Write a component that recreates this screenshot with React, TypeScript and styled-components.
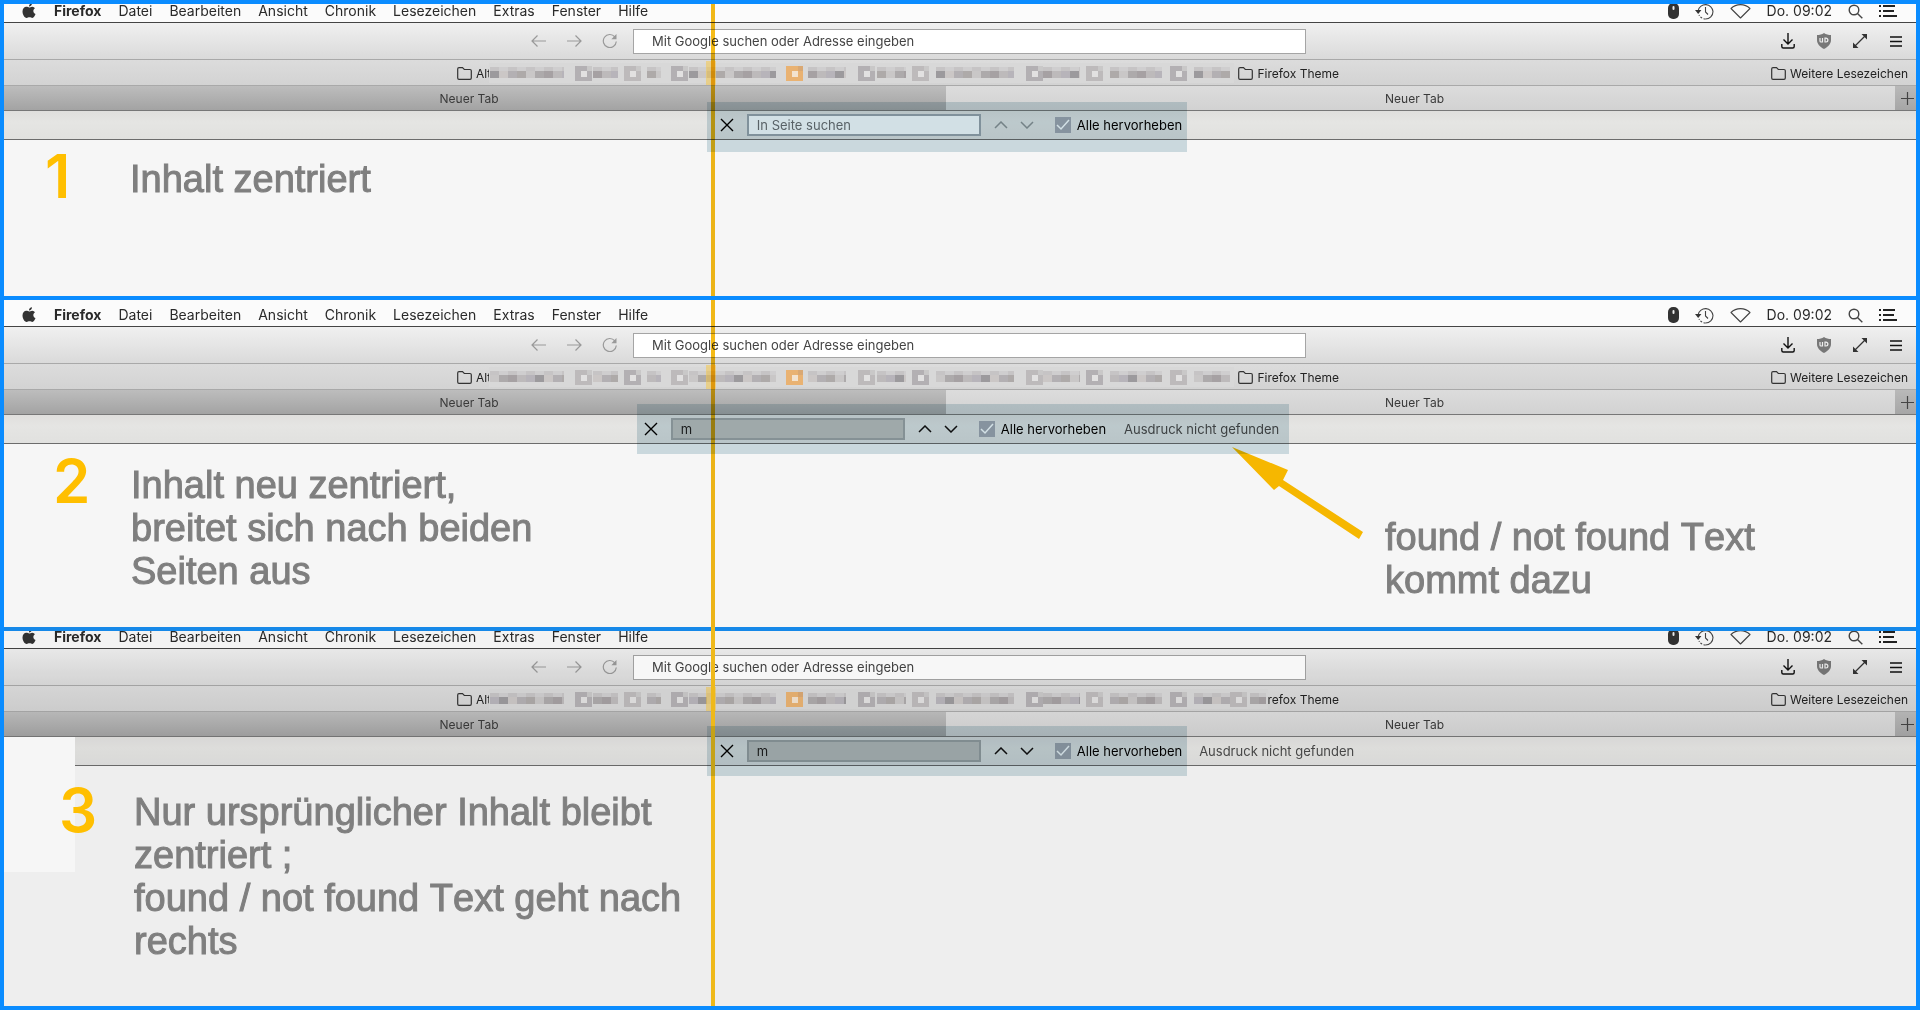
import React from 'react';
import styled, { createGlobalStyle, css } from 'styled-components';

const GlobalStyle = createGlobalStyle`
  *, *::before, *::after { box-sizing: border-box; }
  body { margin: 0; background: #0a8cff; }
  button, input { font: inherit; color: inherit; }
`;

const ui = `Inter, "Open Sans", sans-serif`;
const hand = `"Liberation Sans", Arial, sans-serif`;

const Page = styled.main`
  display: flex;
  flex-direction: column;
  min-height: 100vh;
  padding: 4px;
  font-family: ${ui};
  background: #0a8cff;
`;

const Panel = styled.section<{ $last?: boolean }>`
  position: relative;
  display: flex;
  flex-direction: column;
  flex: ${p => (p.$last ? '1 0 auto' : '0 0 auto')};
  margin-bottom: ${p => (p.$last ? 0 : 4)}px;
  background: #f6f6f6;
`;

const Divider = styled.hr`
  height: 4px;
  margin: -4px 0 0;
  border: 0;
  background: #1688e8;
`;

/* system menu bar */
const MenuBar = styled.header<{ $height: number }>`
  display: flex;
  align-items: flex-end;
  height: ${p => p.$height}px;
  overflow: hidden;
  background: #fbfbfb;
  border-bottom: 1px solid #444;
`;

const MenuRow = styled.div`
  display: flex;
  flex: 1;
  align-items: center;
  justify-content: space-between;
  height: 22px;
  padding: 0 19px 0 16px;
  font-size: 14px;
  line-height: 12px;
  color: #2a2a2a;
`;

const MenuGroup = styled.nav`
  display: flex;
  align-items: center;
  gap: 17px;
`;

const StatusGroup = styled.div`
  display: flex;
  align-items: center;
  gap: 16px;
`;

const MenuButton = styled.button<{ $bold?: boolean }>`
  padding: 0;
  border: 0;
  background: none;
  font-weight: ${p => (p.$bold ? 700 : 400)};
  line-height: 12px;
`;

const IconButton = styled.button<{ $width?: number; $color?: string }>`
  display: flex;
  align-items: center;
  justify-content: center;
  width: ${p => (p.$width ? `${p.$width}px` : 'auto')};
  padding: 0;
  border: 0;
  background: none;
  color: ${p => p.$color ?? '#2a2a2a'};
`;

/* browser chrome */
const Toolbar = styled.div`
  display: grid;
  grid-template-columns: 629fr 673fr 610fr;
  align-items: center;
  height: 37px;
  background: linear-gradient(#f0f0f0, #dadada);
  border-bottom: 1px solid #a9a9a9;
`;

const ToolGroup = styled.div<{ $end: number }>`
  display: flex;
  justify-content: flex-end;
  padding-right: ${p => p.$end}px;
`;

const UrlInput = styled.input`
  width: 100%;
  height: 25px;
  padding: 0 18px;
  border: 1px solid #a5a5a5;
  background: #fff;
  font-size: 13px;
  &::placeholder { color: #444; opacity: 1; }
`;

const BookmarkBar = styled.div`
  display: flex;
  align-items: center;
  justify-content: space-between;
  height: 26px;
  padding: 2px 8px 0 453px;
  background: linear-gradient(#dcdcdc, #d3d3d3);
  border-bottom: 1px solid #a9a9a9;
`;

const BookmarkStrip = styled.div`
  position: relative;
  display: flex;
  align-items: center;
  justify-content: space-between;
  width: 882px;
`;

const Bookmark = styled.a`
  display: flex;
  align-items: center;
  gap: 4px;
  font-size: 12px;
  line-height: 20px;
  color: #222;
  text-decoration: none;
  white-space: nowrap;
`;

const Mosaic = styled.svg`
  position: absolute;
  left: 29px;
  top: -3px;
`;

const TabBar = styled.div`
  display: grid;
  grid-template-columns: 942fr 949fr 21px;
  height: 25px;
  border-bottom: 1px solid #777;
`;

const Tab = styled.button<{ $active?: boolean }>`
  padding: 0 12px 0 0;
  border: 0;
  font-size: 12px;
  color: #3a3a3a;
  background: ${p => (p.$active ? 'linear-gradient(#dcdcdc, #d2d2d2)' : 'linear-gradient(#bdbdbd, #a3a3a3)')};
`;

const NewTab = styled.button`
  display: flex;
  align-items: center;
  justify-content: center;
  padding: 0 0 0 3px;
  border: 0;
  color: #444;
  background: linear-gradient(#b9b9b9, #a6a6a6);
`;

/* find bar */
const FindBar = styled.form<{ $before: number; $after: number }>`
  display: grid;
  grid-template-columns: 1fr auto 1fr;
  align-items: center;
  height: 29px;
  padding: 0 ${p => p.$after}px 0 ${p => p.$before}px;
  background: linear-gradient(#e0dfdd, #e5e5e3 40%, #e1e1df);
  border-bottom: 1px solid #6c6c6c;
`;

const FindGroup = styled.div<{ $start: number; $end: number }>`
  position: relative;
  display: flex;
  grid-column: 2;
  align-items: center;
  padding: 0 ${p => p.$end}px 0 ${p => p.$start}px;
`;

const Highlight = styled.div<{ $top: number }>`
  position: absolute;
  z-index: 3;
  left: 0;
  right: 0;
  top: ${p => p.$top}px;
  height: 50px;
  background: #d2e0e5;
  mix-blend-mode: multiply;
  pointer-events: none;
`;

const FindInput = styled.input<{ $missing?: boolean }>`
  width: 234px;
  height: 22px;
  margin: 0 7px;
  padding: 0 8px;
  border: 2px solid ${p => (p.$missing ? '#a2a5a6' : '#9ba5ad')};
  background: ${p => (p.$missing ? '#c1c1be' : '#fff')};
  font-size: 13px;
  color: #222;
  &::placeholder { color: #6c7073; opacity: 1; }
`;

const CheckLabel = styled.label`
  display: flex;
  align-items: center;
  gap: 6px;
  margin-left: 15px;
  font-size: 13px;
  line-height: 20px;
  color: #000;
  white-space: nowrap;
`;

const CheckBox = styled.input`
  appearance: none;
  width: 16px;
  height: 16px;
  margin: 0;
  background: #a3a8b1 url("data:image/svg+xml,%3Csvg xmlns='http://www.w3.org/2000/svg' viewBox='0 0 16 16' fill='none' stroke='white' stroke-width='1.5'%3E%3Cpath d='M2 8l4 4 8-9'/%3E%3C/svg%3E");
`;

const FindStatus = styled.output<{ $inside?: boolean }>`
  margin-left: ${p => (p.$inside ? 18 : 12)}px;
  font-size: 13px;
  line-height: 20px;
  color: #4a4a4a;
  white-space: nowrap;
`;

/* page area with the annotations */
const Stage = styled.div<{ $min: number; $top: number; $split?: boolean }>`
  display: ${p => (p.$split ? 'grid' : 'block')};
  grid-template-columns: 1228fr 684fr;
  min-height: ${p => p.$min}px;
  padding-top: ${p => p.$top}px;
`;

const Annotation = styled.div<{ $indent: number }>`
  position: relative;
  z-index: 1;
  display: flex;
  align-items: flex-start;
  padding-left: ${p => p.$indent}px;
`;

const Step = styled.span<{ $width: number }>`
  flex: none;
  width: ${p => p.$width}px;
  font: 600 60px/60px ${ui};
  color: #ffbf00;
`;

const heavier = css`
  -webkit-text-stroke: 1px currentColor;
`;

const Note = styled.p<{ $top: number }>`
  margin: ${p => p.$top}px 0 0;
  font: 38px/43px ${hand};
  font-kerning: none;
  color: #7f7f7f;
  white-space: pre-line;
  ${heavier}
`;

const Callout = styled.div`
  display: flex;
  align-items: flex-start;
  gap: 21px;
`;

const Arrow = styled.svg`
  position: relative;
  z-index: 2;
  flex: none;
  margin-top: -4px;
  mix-blend-mode: multiply;
`;

/* vertical guide showing the original left edge of the find bar */
const Guide = styled.div<{ $solid?: boolean }>`
  position: absolute;
  z-index: 2;
  top: ${p => (p.$solid ? -4 : 0)}px;
  bottom: 0;
  left: calc(50% - 249px);
  width: 4px;
  background: ${p => (p.$solid ? '#efb91a' : '#f5bb17')};
  mix-blend-mode: ${p => (p.$solid ? 'normal' : 'multiply')};
  pointer-events: none;
`;

const Patch = styled.div`
  position: absolute;
  top: 106px;
  left: 0;
  width: 71px;
  height: 135px;
  background: #f6f6f6;
`;

const Dim = styled.div`
  position: absolute;
  inset: 0;
  background: rgba(0, 0, 0, 0.032);
  pointer-events: none;
`;

const Apple = () => (
  <svg width="16" height="18" viewBox="0 0 16 18" fill="#333">
    <path d="M11 1.2c.1 1.700-1.400 3.300-3 3.200C7.800 2.800 9.300 1.300 11 1.200zM8.200 5.500c.8 0 1.700-.9 3.100-.8 1.200.1 2.100.6 2.700 1.500-2.500 1.500-2 4.900.5 5.900-.5 1.500-1.700 3.700-3.200 3.800-1 0-1.400-.7-2.800-.7s-1.800.7-2.800.7C3.500 16 1.500 12.400 1.500 9.500c0-3 1.900-4.700 3.800-4.700 1.200 0 2.200.7 2.900.7z" />
  </svg>
);

const MouseIcon = () => (
  <svg width="11" height="16" viewBox="0 0 11 16">
    <rect width="11" height="16" rx="5" fill="#333" />
    <rect x="4.500" y="3" width="2" height="4" rx="1" fill="#eee" />
  </svg>
);

const HistoryIcon = () => (
  <svg width="19" height="17" viewBox="0 0 19 17" fill="none" stroke="#444" strokeWidth="1.100">
    <path d="M3.200 7.500a7.500 7.500 0 0 1 14.800 1 7.500 7.500 0 0 1-7.500 7.500" />
    <path d="M10.500 16a7.500 7.500 0 0 1-6.500-4" strokeDasharray="2 1.500" />
    <path d="M10.500 4v5l2.500 2.500" />
    <path d="M0 7h6.400L3.200 11z" fill="#333" stroke="none" />
  </svg>
);

const WifiIcon = () => (
  <svg width="21" height="16" viewBox="0 0 21 16" fill="none" stroke="#444" strokeWidth="1.100" strokeLinejoin="round">
    <path d="M1 5.500a13.500 13.500 0 0 1 19 0L10.500 15z" />
  </svg>
);

const SearchIcon = () => (
  <svg width="15" height="15" viewBox="0 0 15 15" fill="none" stroke="#444" strokeWidth="1.400">
    <circle cx="6" cy="6" r="4.800" />
    <path d="M9.500 9.500l4.800 4.800" />
  </svg>
);

const ListIcon = () => (
  <svg width="18" height="12" viewBox="0 0 18 12" stroke="#222" strokeWidth="2">
    <path d="M0 1h2M0 6h2M0 11h2M4 1h12M4 6h11M4 11h14" />
  </svg>
);

const BackIcon = ({ flip }: { flip?: boolean }) => (
  <svg width="15" height="14" viewBox="0 0 15 14" fill="none" stroke="currentColor" strokeWidth="1.200">
    {flip ? <path d="M0 7h14M8.500 1.500L14 7l-5.500 5.500" /> : <path d="M15 7H1M6.500 1.500L1 7l5.500 5.500" />}
  </svg>
);

const ReloadIcon = () => (
  <svg width="16" height="16" viewBox="0 0 16 16" fill="none" stroke="currentColor" strokeWidth="1.200">
    <path d="M14.300 8.500A6.500 6.500 0 1 1 12.800 3.800" />
    <path d="M14.500 1v5.200H9.300z" fill="currentColor" stroke="none" />
  </svg>
);

const DownloadIcon = () => (
  <svg width="14" height="16" viewBox="0 0 14 16" fill="none" stroke="#111" strokeWidth="1.400">
    <path d="M7 0v11M2.500 6.500L7 11l4.500-4.500M.8 11v2.500q0 1.500 1.500 1.500h9.400q1.500 0 1.500-1.500V11" />
  </svg>
);

const ShieldIcon = () => (
  <svg width="14" height="16" viewBox="0 0 14 16" fill="none">
    <path d="M7 0c2 1.500 4.500 2 7 2v5c0 4-3 7-7 9-4-2-7-5-7-9V2c2.500 0 5-.5 7-2z" fill="#777" />
    <path d="M3 5v3q0 1 1 1h1.500V5M8 5.200h1a1.900 1.900 0 0 1 0 3.800H8z" stroke="#eee" strokeWidth="1.200" />
  </svg>
);

const ExpandIcon = () => (
  <svg width="14" height="14" viewBox="0 0 14 14" fill="#333" stroke="#333">
    <path d="M2 12L12 2" strokeWidth="1.200" />
    <path d="M8.500 0H14v5.500zM0 8.500V14h5.500z" stroke="none" />
  </svg>
);

const BurgerIcon = () => (
  <svg width="12" height="11" viewBox="0 0 12 11" stroke="#111" strokeWidth="1.400">
    <path d="M0 1h12M0 5.500h12M0 10h12" />
  </svg>
);

const FolderIcon = () => (
  <svg width="15" height="13" viewBox="0 0 15 13" fill="none" stroke="#333" strokeWidth="1.200">
    <path d="M.7 11V2Q.7.700 2 .7h3.500l1.800 1.800H13q1.300 0 1.300 1.300V11q0 1.300-1.300 1.300H2Q.7 12.300.7 11z" />
  </svg>
);

const PlusIcon = () => (
  <svg width="13" height="13" viewBox="0 0 13 13" stroke="currentColor" strokeWidth="1.200">
    <path d="M6.500 0v13M0 6.500h13" />
  </svg>
);

const CloseIcon = () => (
  <svg width="14" height="14" viewBox="0 0 14 14" stroke="#000" strokeWidth="1.400">
    <path d="M1 1l12 12M13 1L1 13" />
  </svg>
);

const Chevron = ({ down }: { down?: boolean }) => (
  <svg width="14" height="8" viewBox="0 0 14 8" fill="none" stroke="currentColor" strokeWidth="1.500">
    <path d={down ? 'M1 1l6 6 6-6' : 'M1 7l6-6 6 6'} />
  </svg>
);

/* pixelated bookmarks: x of the icon (if any), start and end of the caption */
const censored: { icon?: number; from: number; to: number; warm?: boolean }[] = [
  { from: 4, to: 78 },
  { icon: 89, from: 107, to: 132 },
  { icon: 138, from: 161, to: 175 },
  { icon: 185, from: 203, to: 290 },
  { icon: 300, from: 322, to: 360, warm: true },
  { icon: 372, from: 391, to: 420 },
  { icon: 426, from: 450, to: 528 },
  { icon: 540, from: 557, to: 594 },
  { icon: 600, from: 624, to: 676 },
  { icon: 684, from: 708, to: 744 },
];

const greys = ['#adaaab', '#bdbabb', '#9c9a9d', '#b3b0b3', '#c9c7c7', '#a6a1a3', '#b7b4ba', '#cbc7c6', '#aeaaa9'];

function PixelatedBookmarks({ seed, wide }: { seed: number; wide?: boolean }) {
  const width = wide ? 782 : 748;
  const items = wide ? [...censored, { icon: 744, from: 764, to: 780 }] : censored;
  const cells: React.ReactNode[] = [];
  items.forEach((item, i) => {
    if (item.icon !== undefined) {
      const tint = item.warm ? '#e9b272' : greys[(i + seed) % 2 ? 1 : 3];
      cells.push(
        <g key={`i${i}`}>
          <rect x={item.icon} y={5} width={17} height={15} fill={tint} />
          <rect x={item.icon + 6} y={10} width={6} height={6} fill={item.warm ? '#f3e3cf' : '#e2e1e1'} />
          <rect x={item.icon + 12} y={5} width={5} height={5} fill={item.warm ? '#d9a873' : '#c9c8c8'} />
        </g>
      );
    }
    for (let x = item.from, n = 0; x < item.to; x += 9, n++) {
      const shade = greys[(n * 5 + i * 3 + seed * 2) % greys.length];
      const w = Math.min(9, item.to - x);
      cells.push(<rect key={`${i}-${n}`} x={x} y={10} width={w} height={7} fill={shade} />);
      cells.push(<rect key={`${i}-${n}t`} x={x} y={6} width={w} height={4} fill={n % 2 ? '#cfcecf' : '#c6c4c5'} />);
    }
  });
  return (
    <Mosaic width={width} height={25} viewBox={`0 0 ${width} 25`} aria-hidden="true">
      <rect x={3} y={2} width={width - 3} height={20} fill="#d8d8d8" />
      {cells}
      <rect x={220} y={0} width={10} height={24} fill="#f5c84a" opacity={0.55} />
    </Mosaic>
  );
}

const menus = ['Datei', 'Bearbeiten', 'Ansicht', 'Chronik', 'Lesezeichen', 'Extras', 'Fenster', 'Hilfe'];

function Browser({ id, menuHeight, children }: { id: number; menuHeight: number; children: React.ReactNode }) {
  return (
    <>
      <MenuBar $height={menuHeight}>
        <MenuRow>
          <MenuGroup>
            <IconButton type="button" $width={17} aria-label="Apple"><Apple /></IconButton>
            <MenuButton type="button" $bold>Firefox</MenuButton>
            {menus.map(m => <MenuButton type="button" key={m}>{m}</MenuButton>)}
          </MenuGroup>
          <StatusGroup>
            <MouseIcon />
            <HistoryIcon />
            <WifiIcon />
            <span>Do. 09:02</span>
            <SearchIcon />
            <ListIcon />
          </StatusGroup>
        </MenuRow>
      </MenuBar>
      <Toolbar>
        <ToolGroup $end={5}>
          <IconButton type="button" $width={36} $color="#999" aria-label="Zurück"><BackIcon /></IconButton>
          <IconButton type="button" $width={36} $color="#999" aria-label="Vor"><BackIcon flip /></IconButton>
          <IconButton type="button" $width={36} $color="#999" aria-label="Neu laden"><ReloadIcon /></IconButton>
        </ToolGroup>
        <UrlInput aria-label="Adresse" placeholder="Mit Google suchen oder Adresse eingeben" />
        <ToolGroup $end={2}>
          <IconButton type="button" $width={36} aria-label="Downloads"><DownloadIcon /></IconButton>
          <IconButton type="button" $width={36} aria-label="Schutz"><ShieldIcon /></IconButton>
          <IconButton type="button" $width={36} aria-label="Vollbild"><ExpandIcon /></IconButton>
          <IconButton type="button" $width={36} aria-label="Menü"><BurgerIcon /></IconButton>
        </ToolGroup>
      </Toolbar>
      <BookmarkBar>
        <BookmarkStrip>
          <Bookmark href="#"><FolderIcon />Alte</Bookmark>
          <Bookmark href="#"><FolderIcon />Firefox Theme</Bookmark>
          <PixelatedBookmarks seed={id} wide={id === 3} />
        </BookmarkStrip>
        <Bookmark href="#"><FolderIcon />Weitere Lesezeichen</Bookmark>
      </BookmarkBar>
      <TabBar>
        <Tab type="button">Neuer Tab</Tab>
        <Tab type="button" $active>Neuer Tab</Tab>
        <NewTab type="button" aria-label="Neuer Tab"><PlusIcon /></NewTab>
      </TabBar>
      {children}
    </>
  );
}

interface FindProps {
  id: number;
  value?: string;
  before?: number;
  after?: number;
  top: number;
  status?: 'inside' | 'outside';
}

function Find({ id, value, before = 0, after = 0, top, status }: FindProps) {
  const arrows = value ? '#111' : '#8d9496';
  const inside = status === 'inside';
  return (
    <FindBar $before={before} $after={after} onSubmit={e => e.preventDefault()}>
      <FindGroup $start={inside ? 1 : 7} $end={inside ? 10 : 5}>
        <IconButton type="button" $width={26} aria-label="Schließen"><CloseIcon /></IconButton>
        <FindInput aria-label="In Seite suchen" placeholder="In Seite suchen" defaultValue={value} $missing={!!value} />
        <IconButton type="button" $width={26} $color={arrows} aria-label="Vorheriges"><Chevron /></IconButton>
        <IconButton type="button" $width={26} $color={arrows} aria-label="Nächstes"><Chevron down /></IconButton>
        <CheckLabel htmlFor={`all-${id}`}>
          <CheckBox id={`all-${id}`} type="checkbox" defaultChecked />
          Alle hervorheben
        </CheckLabel>
        {inside && <FindStatus $inside>Ausdruck nicht gefunden</FindStatus>}
        <Highlight $top={top} />
      </FindGroup>
      {status === 'outside' && <FindStatus>Ausdruck nicht gefunden</FindStatus>}
    </FindBar>
  );
}

export default function App() {
  return (
    <>
      <GlobalStyle />
      <Page>
        <Panel>
          <Browser id={1} menuHeight={19}>
            <Find id={1} after={26} top={-12} />
          </Browser>
          <Stage $min={156} $top={6}>
            <Annotation $indent={41}>
              <Step $width={85}>1</Step>
              <Note $top={12}>Inhalt zentriert</Note>
            </Annotation>
          </Stage>
          <Guide />
        </Panel>

        <Panel>
          <Browser id={2} menuHeight={27}>
            <Find id={2} value="m" before={6} top={-14} status="inside" />
          </Browser>
          <Stage $min={183} $top={7} $split>
            <Annotation $indent={49}>
              <Step $width={78}>2</Step>
              <Note $top={13}>{'Inhalt neu zentriert,\nbreitet sich nach beiden\nSeiten aus'}</Note>
            </Annotation>
            <Callout>
              <Arrow width="132" height="94" viewBox="0 0 132 94" fill="#ffbe00">
                <path d="M0 0L56 23 51 33 131 85 127 92 47 39 42 43z" />
              </Arrow>
              <Note $top={65}>{'found / not found Text\nkommt dazu'}</Note>
            </Callout>
          </Stage>
          <Guide />
        </Panel>

        <Divider />
        <Panel $last>
          <Browser id={3} menuHeight={18}>
            <Find id={3} value="m" after={26} top={-14} status="outside" />
          </Browser>
          <Stage $min={220} $top={14}>
            <Annotation $indent={55}>
              <Step $width={75}>3</Step>
              <Note $top={11}>{'Nur ursprünglicher Inhalt bleibt\nzentriert ;\nfound / not found Text geht nach\nrechts'}</Note>
            </Annotation>
          </Stage>
          <Dim />
          <Patch />
          <Guide $solid />
        </Panel>
      </Page>
    </>
  );
}
